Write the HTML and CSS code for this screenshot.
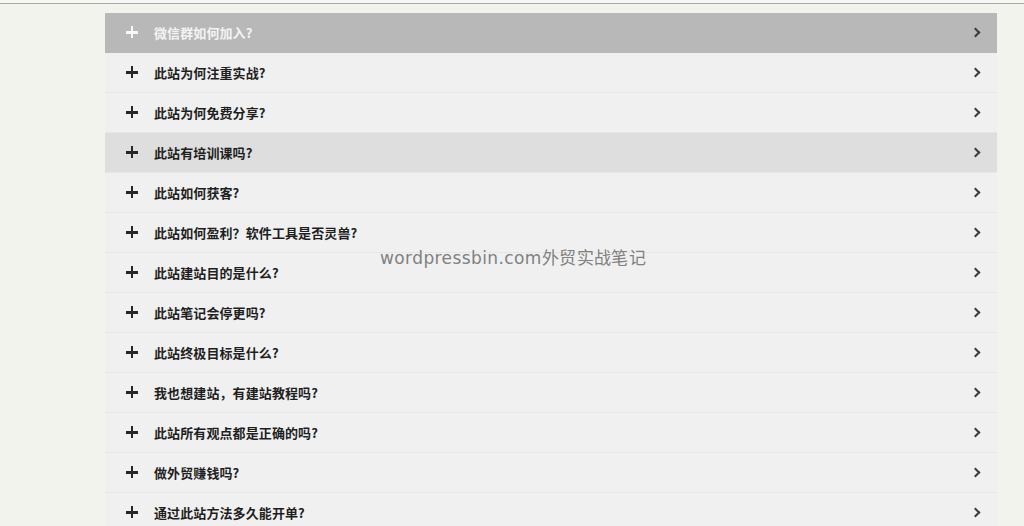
FILE: index.html
```html
<!DOCTYPE html>
<html lang="zh-CN">
<head>
<meta charset="utf-8">
<title>FAQ</title>
<link rel="stylesheet" href="styles.css">
</head>
<body>
<div class="topbar"></div>
<main class="page">
  <ul class="faq">
    <li class="item active"><span class="plus"></span><span class="q">微信群如何加入?</span><span class="chev"></span></li>
    <li class="item"><span class="plus"></span><span class="q">此站为何注重实战?</span><span class="chev"></span></li>
    <li class="item"><span class="plus"></span><span class="q">此站为何免费分享?</span><span class="chev"></span></li>
    <li class="item hover"><span class="plus"></span><span class="q">此站有培训课吗?</span><span class="chev"></span></li>
    <li class="item"><span class="plus"></span><span class="q">此站如何获客?</span><span class="chev"></span></li>
    <li class="item"><span class="plus"></span><span class="q">此站如何盈利？软件工具是否灵兽?</span><span class="chev"></span></li>
    <li class="item"><span class="plus"></span><span class="q">此站建站目的是什么?</span><span class="chev"></span></li>
    <li class="item"><span class="plus"></span><span class="q">此站笔记会停更吗?</span><span class="chev"></span></li>
    <li class="item"><span class="plus"></span><span class="q">此站终极目标是什么?</span><span class="chev"></span></li>
    <li class="item"><span class="plus"></span><span class="q">我也想建站，有建站教程吗?</span><span class="chev"></span></li>
    <li class="item"><span class="plus"></span><span class="q">此站所有观点都是正确的吗?</span><span class="chev"></span></li>
    <li class="item"><span class="plus"></span><span class="q">做外贸赚钱吗?</span><span class="chev"></span></li>
    <li class="item"><span class="plus"></span><span class="q">通过此站方法多久能开单?</span><span class="chev"></span></li>
  </ul>
</main>
<div class="watermark">wordpressbin.com外贸实战笔记</div>
</body>
</html>
```

FILE: styles.css
```css
html, body {
  margin: 0;
  padding: 0;
}
body {
  background: #f3f3ee;
  font-family: "Noto Sans CJK SC", "Noto Sans", sans-serif;
  height: 526px;
  overflow: hidden;
  position: relative;
}
.topbar {
  height: 3px;
  background: #f7f7f4;
  border-bottom: 1px solid #a9a9a9;
}
.page {
  padding: 9px 0 0 105px;
}
.faq {
  list-style: none;
  margin: 0;
  padding: 0;
  width: 892px;
}
.item {
  display: flex;
  align-items: center;
  height: 39px;
  border-bottom: 1px solid #e6e6e4;
  background: #f0f0f0;
  padding: 0 16px 1px 21px;
  box-sizing: content-box;
  color: #1e1e1e;
}
.faq .item {
  height: 38px;
}
.item.hover {
  background: #dedede;
}
.item.active {
  background: #b8b8b8;
  color: #f4f4f4;
  border-bottom-color: #b8b8b8;
}
.plus {
  position: relative;
  width: 12px;
  height: 12px;
  flex: none;
  margin-right: 16px;
}
.plus::before, .plus::after {
  content: "";
  position: absolute;
  background: #262626;
}
.plus::before {
  left: 0;
  top: 5px;
  width: 12px;
  height: 2.5px;
}
.plus::after {
  left: 4.75px;
  top: 0;
  width: 2.5px;
  height: 12px;
}
.active .plus::before, .active .plus::after {
  background: #f8f8f8;
}
.q {
  flex: 1;
  font-size: 13px;
  font-weight: 700;
  letter-spacing: 0.1px;
}
.chev {
  width: 5px;
  height: 5px;
  border-right: 2px solid #3c3c3c;
  border-top: 2px solid #3c3c3c;
  transform: rotate(45deg);
  margin-right: 2px;
}
.watermark {
  position: absolute;
  left: 380px;
  top: 244px;
  font-family: "DejaVu Sans", sans-serif;
  font-size: 17px;
  color: #808080;
  letter-spacing: 0.4px;
  white-space: nowrap;
}
```
